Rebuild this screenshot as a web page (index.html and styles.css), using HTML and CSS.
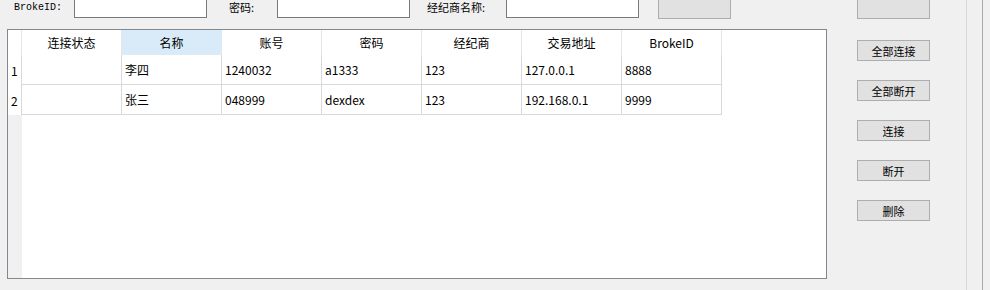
FILE: index.html
```html
<!DOCTYPE html>
<html>
<head>
    <meta charset="UTF-8">
    <title>账户管理</title>
    <link rel="stylesheet" href="styles.css">
</head>
<body>
    <div class="window">
        <div class="content">
            <!-- Query bar -->
            <div class="toolbar">
                <span class="field-label lbl-id">BrokeID:</span>
                <div class="text-box"></div>
                <span class="field-label lbl-pwd">密码:</span>
                <div class="text-box"></div>
                <span class="field-label lbl-name">经纪商名称:</span>
                <div class="text-box"></div>
                <button class="btn btn-top btn-query"></button>
            </div>

            <!-- Account grid -->
            <div class="grid-panel">
                <table class="grid">
                    <thead>
                        <tr>
                            <th class="row-head"></th>
                            <th>连接状态</th>
                            <th class="selected">名称</th>
                            <th>账号</th>
                            <th>密码</th>
                            <th>经纪商</th>
                            <th>交易地址</th>
                            <th>BrokeID</th>
                        </tr>
                    </thead>
                    <tbody>
                        <tr>
                            <td class="row-head">1</td>
                            <td></td>
                            <td>李四</td>
                            <td>1240032</td>
                            <td>a1333</td>
                            <td>123</td>
                            <td>127.0.0.1</td>
                            <td>8888</td>
                        </tr>
                        <tr>
                            <td class="row-head">2</td>
                            <td></td>
                            <td>张三</td>
                            <td>048999</td>
                            <td>dexdex</td>
                            <td>123</td>
                            <td>192.168.0.1</td>
                            <td>9999</td>
                        </tr>
                    </tbody>
                </table>
            </div>
        </div>

        <!-- Actions -->
        <div class="side">
            <button class="btn btn-top"></button>
            <button class="btn btn-action btn-first">全部连接</button>
            <button class="btn btn-action">全部断开</button>
            <button class="btn btn-action">连接</button>
            <button class="btn btn-action">断开</button>
            <button class="btn btn-action">删除</button>
        </div>

        <div class="rail"></div>
    </div>
</body>
</html>
```

FILE: styles.css
```css
body {
    margin: 0;
    background-color: #f0f0f0;
    font-family: "Noto Sans CJK SC", "Noto Sans", sans-serif;
    color: #000;
}
.window {
    display: flex;
    width: 990px;
    height: 290px;
    overflow: hidden;
}
.content {
    width: 827px;
}
/* Top query bar */
.toolbar {
    display: flex;
    align-items: flex-start;
    height: 25px;
    margin-top: -6px;
}
.field-label {
    font-size: 11px;
    line-height: 14px;
    margin-top: 6px;
    white-space: nowrap;
}
.lbl-id {
    font-family: "Liberation Mono", monospace;
    font-size: 10px;
    margin-top: 7px;
    margin-left: 14px;
    width: 60px;
}
.lbl-pwd {
    margin-left: 22px;
    width: 48px;
}
.lbl-name {
    margin-left: 17px;
    width: 79px;
}
.text-box {
    box-sizing: border-box;
    width: 133px;
    height: 24px;
    background: #fff;
    border: 1px solid #7a7a7a;
}
.btn {
    box-sizing: border-box;
    display: block;
    width: 73px;
    padding: 0;
    background: #e1e1e1;
    border: 1px solid #adadad;
    font-family: "Noto Sans CJK SC", sans-serif;
    font-size: 11px;
    color: #000;
}
.btn-top {
    height: 25px;
}
.btn-query {
    margin-left: 19px;
}
/* Grid */
.grid-panel {
    box-sizing: border-box;
    margin-top: 10px;
    margin-left: 7px;
    width: 820px;
    height: 250px;
    border: 1px solid #828790;
    background: linear-gradient(to right, #f0f0f0 14px, #fff 14px);
}
.grid {
    border-collapse: separate;
    border-spacing: 0;
    table-layout: fixed;
    width: 714px;
    font-size: 12px;
}
.grid th {
    box-sizing: border-box;
    width: 100px;
    height: 25px;
    padding: 0;
    font-weight: normal;
    text-align: center;
    background: #fff;
    border-right: 1px solid #e5e5e5;
}
.grid th.selected {
    background: #d9ebf9;
    border-right-color: #d9ebf9;
}
.grid td {
    height: 29px;
    padding: 0 3px;
    background: #fff;
    border-right: 1px solid #d9d9d9;
    border-bottom: 1px solid #d9d9d9;
    white-space: nowrap;
}
.grid th.row-head {
    width: 14px;
}
.grid td.row-head {
    padding: 0 0 0 3px;
    border-bottom: none;
}
/* Right side actions */
.side {
    margin-left: 30px;
    margin-top: -6px;
    width: 73px;
}
.btn-action {
    height: 21px;
    margin-top: 19px;
}
.btn-action.btn-first {
    margin-top: 21px;
}
.rail {
    box-sizing: border-box;
    margin-left: 36px;
    width: 17px;
    height: 100%;
    border-left: 1px solid #d9d9d9;
    border-right: 1px solid #a9a9a9;
}
```
